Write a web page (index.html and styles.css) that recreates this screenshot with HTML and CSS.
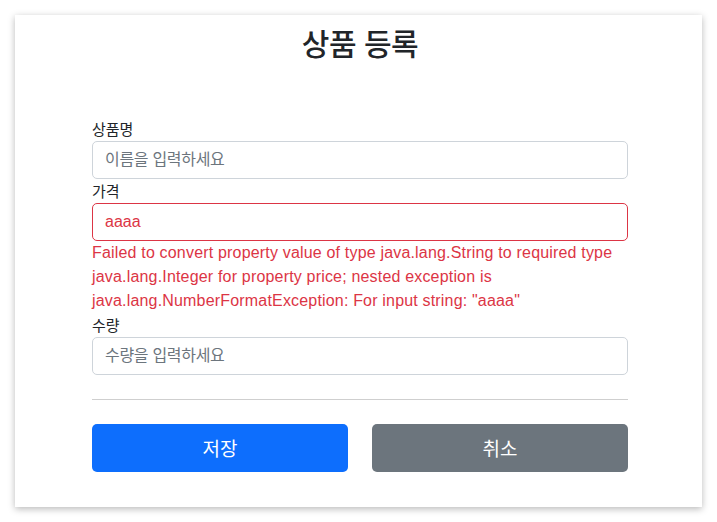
FILE: index.html
```html
<!DOCTYPE html>
<html lang="ko">
<head>
<meta charset="utf-8">
<title>상품 등록</title>
<link rel="stylesheet" href="styles.css">
</head>
<body>
<div class="window">
  <div class="content">
    <h2 class="title">상품 등록</h2>
    <form class="form">
      <label class="label" for="itemName">상품명</label>
      <input class="input" id="itemName" type="text" placeholder="이름을 입력하세요">
      <label class="label" for="price">가격</label>
      <input class="input input-error" id="price" type="text" value="aaaa">
      <div class="field-error">Failed to convert property value of type java.lang.String to required type java.lang.Integer for property price; nested exception is java.lang.NumberFormatException: For input string: "aaaa"</div>
      <label class="label" for="quantity">수량</label>
      <input class="input" id="quantity" type="text" placeholder="수량을 입력하세요">
      <hr class="divider">
      <div class="actions">
        <button type="button" class="btn btn-primary">저장</button>
        <button type="button" class="btn btn-secondary">취소</button>
      </div>
    </form>
  </div>
</div>
</body>
</html>
```

FILE: styles.css
```css
* { box-sizing: border-box; }
html, body {
  margin: 0;
  padding: 0;
  background: #ffffff;
}
body {
  min-height: 522px;
  padding: 15px 15px 15px 15px;
  font-family: "Liberation Sans", Arial, "Noto Sans CJK KR", sans-serif;
  font-size: 16px;
  line-height: 1.5;
  color: #212529;
}
.window {
  width: 687px;
  height: 492px;
  background: #fff;
  box-shadow: 0 2px 7px rgba(0, 0, 0, 0.28);
  padding: 8px 74px 0 77px;
}
.content {
  width: 536px;
  display: flex;
  flex-direction: column;
}
.title {
  margin: 0 0 56px 0;
  text-align: center;
  font-family: "Noto Sans CJK KR", sans-serif;
  font-size: 30px;
  font-weight: 500;
  line-height: 38px;
  letter-spacing: -0.5px;
  color: #212529;
}
.form {
  display: flex;
  flex-direction: column;
}
.label {
  display: block;
  font-family: "Noto Sans CJK KR", sans-serif;
  font-size: 15px;
  line-height: 24px;
  color: #212529;
}
.input {
  display: block;
  width: 100%;
  height: 38px;
  padding: 6px 12px;
  font-family: "Liberation Sans", Arial, "Noto Sans CJK KR", sans-serif;
  font-size: 16px;
  line-height: 24px;
  color: #212529;
  background: #fff;
  border: 1px solid #ced4da;
  border-radius: 5px;
  outline: none;
}
.input::placeholder {
  color: #6c757d;
  font-family: "Noto Sans CJK KR", sans-serif;
  font-size: 16px;
  letter-spacing: -0.3px;
}
.input-error {
  border-color: #dc3545;
  color: #dc3545;
}
.field-error {
  color: #dc3545;
  font-size: 16px;
  line-height: 24px;
  letter-spacing: 0.18px;
}
.divider {
  margin: 24px 0;
  border: 0;
  border-top: 1px solid #cfcfcf;
  height: 0;
}
.actions {
  display: grid;
  grid-template-columns: 1fr 1fr;
  column-gap: 24px;
}
.btn {
  height: 48px;
  border: 0;
  border-radius: 5px;
  color: #fff;
  font-family: "Noto Sans CJK KR", sans-serif;
  font-size: 19px;
  font-weight: 400;
  line-height: 30px;
  padding: 8px 16px;
  cursor: pointer;
}
.btn-primary { background: #0d6efd; }
.btn-secondary { background: #6c757d; }
```
